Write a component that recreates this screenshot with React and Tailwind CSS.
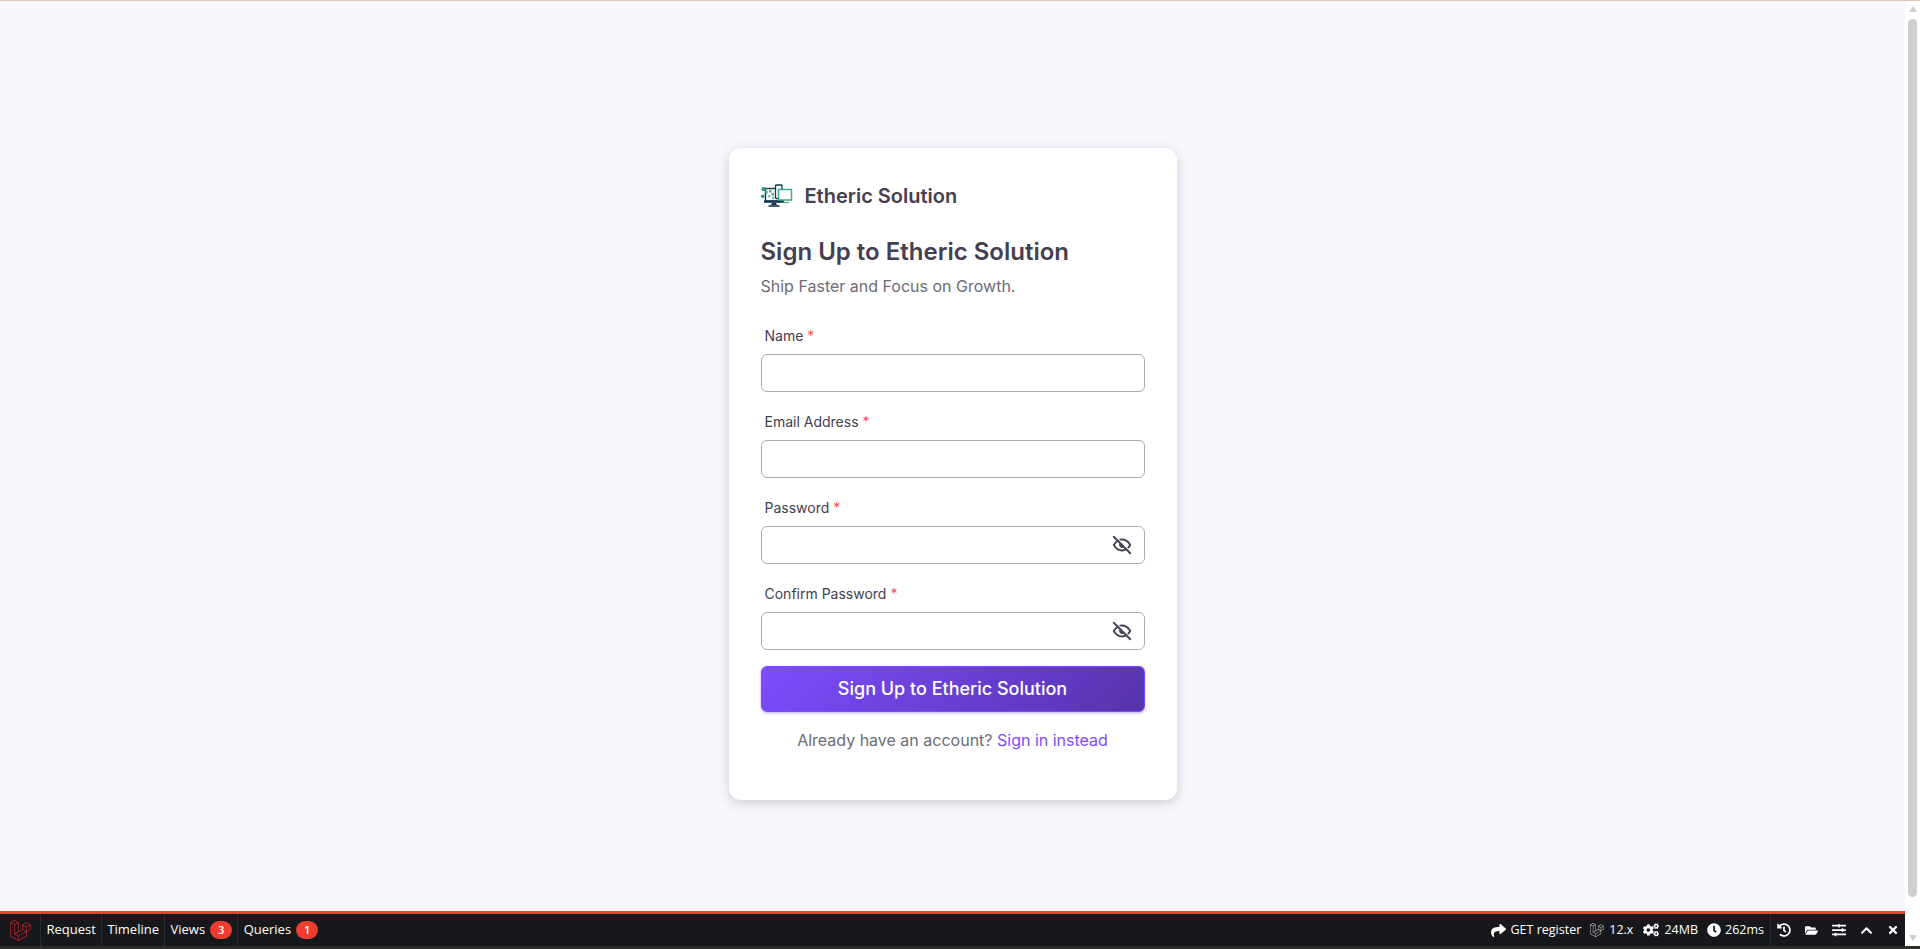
import React from 'react';
import { TbEyeOff } from 'react-icons/tb';
import { FaLaravel, FaShare, FaCogs, FaClock, FaHistory, FaFolderOpen, FaSlidersH, FaChevronUp, FaTimes } from 'react-icons/fa';

const Logo = () => (
  <svg width="32" height="24" viewBox="0 0 32 24" fill="none">
    {/* monitor */}
    <path d="M4.5 4.5V17H22" stroke="#12354a" strokeWidth="1.4" />
    <path d="M4 4.5H14" stroke="#12354a" strokeWidth="1.4" />
    <path d="M3 16.5H23V18.8H3Z" fill="#12354a" />
    <path d="M11 19H15L16 21H10Z" fill="#12354a" />
    <path d="M7.5 22H18.5" stroke="#12354a" strokeWidth="1.6" />
    {/* phone */}
    <rect x="14.5" y="1" width="6.5" height="13.5" rx="1" fill="#fff" stroke="#12354a" strokeWidth="1.3" />
    {/* tablet */}
    <rect x="17.5" y="5.5" width="13" height="10.5" fill="#fff" stroke="#3fa796" strokeWidth="1.5" />
    <path d="M21 18.5H28" stroke="#3fa796" strokeWidth="1.2" />
    {/* dots */}
    <rect x="0.5" y="3" width="4" height="4" rx="1.5" fill="#2fa08c" />
    <rect x="4" y="7" width="2.5" height="2.5" fill="#2fa08c" />
    <rect x="0" y="10.5" width="3.5" height="3.5" rx="1.5" fill="#2fa08c" />
    <rect x="8" y="6" width="2.5" height="2.5" fill="#5fa99c" />
    <rect x="10.5" y="9" width="2.5" height="2.5" fill="#5fa99c" />
    <rect x="7" y="11" width="2.5" height="2.5" fill="#8fbdb4" />
    <rect x="11" y="12.5" width="2.5" height="2.5" fill="#8fbdb4" />
  </svg>
);

const Field = ({ label, toggle }) => (
  <div>
    <label className="block px-1 mb-[9px] text-[14px] leading-[19px] text-[#444050]">
      {label} <span className="text-[#ff4c51]">*</span>
    </label>
    <div className="relative">
      <input type="text" className="block w-full h-[38px] rounded-[6px] border border-[#acaab1] bg-white outline-none" />
      {toggle && (
        <span className="absolute right-[12px] top-[8px] text-[#444050]">
          <TbEyeOff size={22} />
        </span>
      )}
    </div>
  </div>
);

const Tab = ({ label, badge, last }) => (
  <div className={`flex items-center h-full pl-[5.5px] pr-[5px] gap-[5px] ${last ? '' : 'border-r border-[#262b35]'}`}>
    <span>{label}</span>
    {badge && (
      <span className="flex items-center justify-center w-[22px] h-[18px] rounded-full bg-[#ee3d2f] text-white text-[11px] font-semibold">
        {badge}
      </span>
    )}
  </div>
);

export default function App() {
  return (
    <div className="relative flex h-screen overflow-hidden bg-white font-['Inter',sans-serif]">
      <div className="absolute top-0 left-0 right-0 h-px bg-[#e5c4bb]" />
      <main className="flex-1 flex items-center justify-center pb-px bg-[#f8f7fc]">
        <div className="w-[448px] h-[652px] rounded-[12px] bg-white p-8 shadow-[0_3px_12px_rgba(47,43,61,0.2)]">
          <div className="flex items-center gap-3 h-[32px] mb-[21px]">
            <Logo />
            <span className="text-[20px] font-semibold text-[#444050]">Etheric Solution</span>
          </div>
          <h4 className="text-[24px] leading-[38px] font-semibold text-[#444050]">Sign Up to Etheric Solution</h4>
          <p className="text-[16px] leading-[22px] mt-[4px] mb-[29px] text-[#6d6b77]">Ship Faster and Focus on Growth.</p>
          <form className="flex flex-col gap-[20px]">
            <Field label="Name" />
            <Field label="Email Address" />
            <Field label="Password" toggle />
            <Field label="Confirm Password" toggle />
            <button
              type="button"
              className="block w-full h-[46px] -mt-[4px] pb-[2px] rounded-[6px] border border-[#7c4dff] bg-linear-135 from-[#7c4dff] to-[#5633ab] text-white text-[18px] font-medium shadow-[0_1px_3px_rgba(124,77,255,0.5)]"
            >
              Sign Up to Etheric Solution
            </button>
          </form>
          <p className="mt-[17px] text-center text-[16px] leading-[22px] text-[#6d6b77]">
            Already have an account? <a className="text-[#7c4dff]">Sign in instead</a>
          </p>
        </div>
      </main>

      {/* browser scrollbar */}
      <div className="flex flex-col items-center w-[15px] bg-white">
        <div className="mt-[6px] w-0 h-0 border-x-[4.5px] border-x-transparent border-b-[6px] border-b-[#cfcfcf]" />
        <div className="mt-[7px] w-[9px] h-[878px] rounded-[5px] bg-[#cfcfcf]" />
        <div className="mt-[38px] w-0 h-0 border-x-[4.5px] border-x-transparent border-t-[6px] border-t-[#cfcfcf]" />
      </div>

      {/* debugbar */}
      <div className="absolute left-0 right-[15px] bottom-[3px] h-[35px] flex items-center justify-between border-t-[3px] border-[#e8412f] bg-[#17181c] text-white text-[13px] font-['Open_Sans',sans-serif]">
        <div className="flex items-center h-full">
          <div className="flex items-center justify-center w-[41px] h-full border-r border-[#262b35] text-[#c8242b]">
            <FaLaravel size={21} />
          </div>
          <Tab label="Request" />
          <Tab label="Timeline" />
          <Tab label="Views" badge="3" />
          <Tab label="Queries" badge="1" last />
        </div>
        <div className="flex items-center h-full text-[12.5px]">
          <span className="flex items-center gap-[4px] mr-[9px]"><FaShare size={15} />GET register</span>
          <span className="flex items-center gap-[5px] mr-[10px]"><FaLaravel size={14} className="text-[#d8d8d8]" />12.x</span>
          <span className="flex items-center gap-[5px] mr-[9px]"><FaCogs size={16} />24MB</span>
          <span className="flex items-center gap-[4px] mr-[6px]"><FaClock size={14} />262ms</span>
          <div className="flex items-center h-full border-l border-[#262b35] pl-[6px] pr-[6px] gap-[14px]">
            <FaHistory size={14} />
            <FaFolderOpen size={13} />
            <FaSlidersH size={14} />
            <FaChevronUp size={13} />
            <FaTimes size={12} />
          </div>
        </div>
      </div>
      <div className="absolute left-0 right-0 bottom-0 h-[3px] bg-[#2c2f28]" />
    </div>
  );
}
